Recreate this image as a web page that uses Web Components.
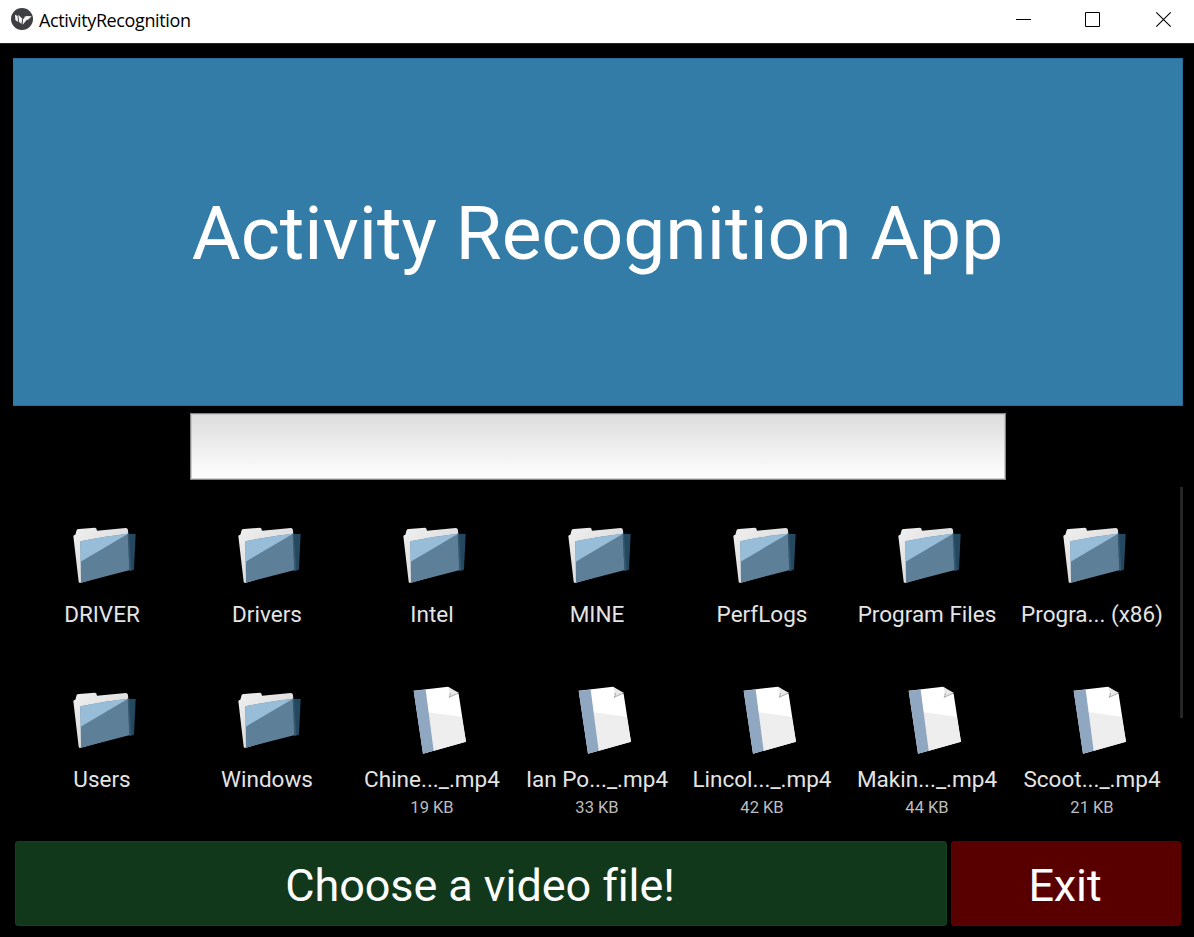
<!DOCTYPE html>
<html lang="en">
<head>
<meta charset="utf-8">
<title>ActivityRecognition</title>
<style>
html,body{margin:0;height:100%;background:#000;overflow:hidden}
</style>
</head>
<body>
<activity-app></activity-app>
<script>
const define = (name, html) => {
  const t = document.createElement('template');
  t.innerHTML = html;
  customElements.define(name, class extends HTMLElement {
    constructor() {
      super();
      this.attachShadow({mode: 'open'}).append(t.content.cloneNode(true));
    }
  });
};

define('title-bar', `
<style>
:host{display:flex;height:43px;background:#fff;color:#000;border-bottom:1px solid #1c2826;font:18px/24px "Open Sans","Noto Sans",sans-serif}
.logo{width:24px;height:24px;margin:7px 0 0 10px;flex:none}
.name{margin:8px 0 0 5px;white-space:nowrap;flex:1;letter-spacing:-.38px}
.controls{width:214px;height:42px;flex:none}
</style>
<svg class="logo" viewBox="0 0 72 72"><circle cx="36" cy="36" r="33" fill="#3e3f42"/><path d="M15 23L23 27L24 45L16 39ZM25 23L37 35L34 51L27 44ZM38 53L39 37L44 32L52 37ZM42 30L50 27L65 28L56 37L51 39L46 34Z" fill="#f4f4f4"/></svg>
<span class="name"><slot></slot></span>
<svg class="controls" viewBox="0 0 214 42" fill="none" stroke="#000" stroke-width="1"><path d="M36 19.500H51M105.500 12.500H119.500V26.500H105.500Z"/><path d="M176.300 12.300L190.700 26.700M190.700 12.300L176.300 26.700" stroke-width="1.100"/></svg>
`);

define('app-banner', `
<style>
:host{display:flex;align-items:center;justify-content:center;height:346px;margin:14px 11px 0 13px;border:1px solid #286d99;border-width:1px 1px 1px 0;background:#337ca8;color:#fff;font-size:75px;line-height:90px;white-space:nowrap;box-sizing:content-box}
span{margin-top:2px;letter-spacing:-.05px}
</style>
<span><slot></slot></span>
`);

define('path-field', `
<style>
:host{display:block;box-sizing:border-box;width:816px;height:67px;margin:7px 0 0 190px;border:1px solid #858585;box-shadow:inset 0 0 0 1px rgba(185,185,185,.65);background:linear-gradient(#dcdcdc,#fff)}
</style>
`);

define('file-entry', `
<style>
:host{display:flex;flex-direction:column;align-items:center;height:165px;color:#e4e4e4;white-space:nowrap}
svg{display:none;width:90px;height:80px;align-self:flex-start;margin-left:40px;overflow:visible;flex:none}
:host([kind=folder]) .folder,:host([kind=file]) .file{display:block}
.label{font-size:22.500px;line-height:28px;margin-top:5px}
.size{font-size:16.500px;line-height:20px;margin-top:5px;color:#bdbdbd}
</style>
<svg class="folder" viewBox="0 0 270 240">
<defs><linearGradient id="p" x1="0" y1="0" x2="1" y2="1"><stop stop-color="#f0f0f0"/><stop offset="1" stop-color="#cfcfcf"/></linearGradient></defs>
<path d="M40 63Q41 60 46 59L50 45Q51 42 57 42L105 38Q110 38 111 47L197 39Q203 39 204 45L212 160L63 203Q57 205 56 200Z" fill="url(#p)"/>
<path d="M61 79Q130 64 203 56L210 165L63 203Z" fill="#5d7f98"/>
<path d="M61 79Q130 64 203 56L203 57L62 140Z" fill="#98bdd8"/>
<path d="M203 56L227 57L222 162Q222 166 217 166L209 168Z" fill="#254861"/>
<path d="M203 56L207 57L214 165L208 168Z" fill="#36586f"/>
</svg>
<svg class="file" viewBox="0 0 270 240">
<path d="M71 32L174 20L206 42L228 185L99 221Z" fill="#fff"/>
<path d="M106 95Q160 103 215 110L228 185L130 213L123 180Z" fill="#eee"/>
<path d="M71 32L107 29L131 212L99 221Z" fill="#8fa7c0"/>
<path d="M174 20L206 38L177 52Q182 37 174 20Z" fill="#e7e7e7"/><path d="M206 39L177 52Q181 48 181 39" fill="none" stroke="#aaa" stroke-width="3"/>
</svg>
<span class="label"><slot></slot></span><span class="size"><slot name="size"></slot></span>
`);

define('file-browser', `
<style>
:host{display:flex;height:354px;margin-top:7px}
.grid{display:grid;grid-template-columns:repeat(7,165px);grid-auto-rows:165px;padding:28px 0 0 19.500px;flex:1;box-sizing:border-box}
.bar{width:3px;height:231px;margin-right:11px;background:#262626;flex:none}
</style>
<div class="grid"><slot></slot></div><div class="bar"></div>
`);

define('action-button', `
<style>
:host{display:flex;align-items:center;justify-content:center;box-sizing:border-box;height:85px;color:#fff;background:var(--fill);border:1px solid var(--edge);border-radius:3px;font-size:45px;line-height:54px;white-space:nowrap}
span{margin-top:4px;letter-spacing:-.08px}
</style>
<span><slot></slot></span>
`);

define('activity-app', `
<style>
:host{display:block;width:1194px;height:937px;background:#000;font-family:Roboto,sans-serif}
.actions{display:grid;grid-template-columns:932px 230px;column-gap:4px;padding-left:15px}
.choose{--fill:#12381c;--edge:#153f20;padding-right:2px}
.exit{--fill:#580000;--edge:#620000;padding-right:2px}
</style>
<title-bar>ActivityRecognition</title-bar>
<app-banner>Activity Recognition App</app-banner>
<path-field></path-field>
<file-browser>
<file-entry kind="folder">DRIVER</file-entry>
<file-entry kind="folder">Drivers</file-entry>
<file-entry kind="folder">Intel</file-entry>
<file-entry kind="folder">MINE</file-entry>
<file-entry kind="folder">PerfLogs</file-entry>
<file-entry kind="folder">Program Files</file-entry>
<file-entry kind="folder">Progra... (x86)</file-entry>
<file-entry kind="folder">Users</file-entry>
<file-entry kind="folder">Windows</file-entry>
<file-entry kind="file">Chine..._.mp4<span slot="size">19 KB</span></file-entry>
<file-entry kind="file">Ian Po..._.mp4<span slot="size">33 KB</span></file-entry>
<file-entry kind="file">Lincol..._.mp4<span slot="size">42 KB</span></file-entry>
<file-entry kind="file">Makin..._.mp4<span slot="size">44 KB</span></file-entry>
<file-entry kind="file">Scoot..._.mp4<span slot="size">21 KB</span></file-entry>
</file-browser>
<div class="actions">
<action-button class="choose">Choose a video file!</action-button>
<action-button class="exit">Exit</action-button>
</div>
`);
</script>
</body>
</html>
